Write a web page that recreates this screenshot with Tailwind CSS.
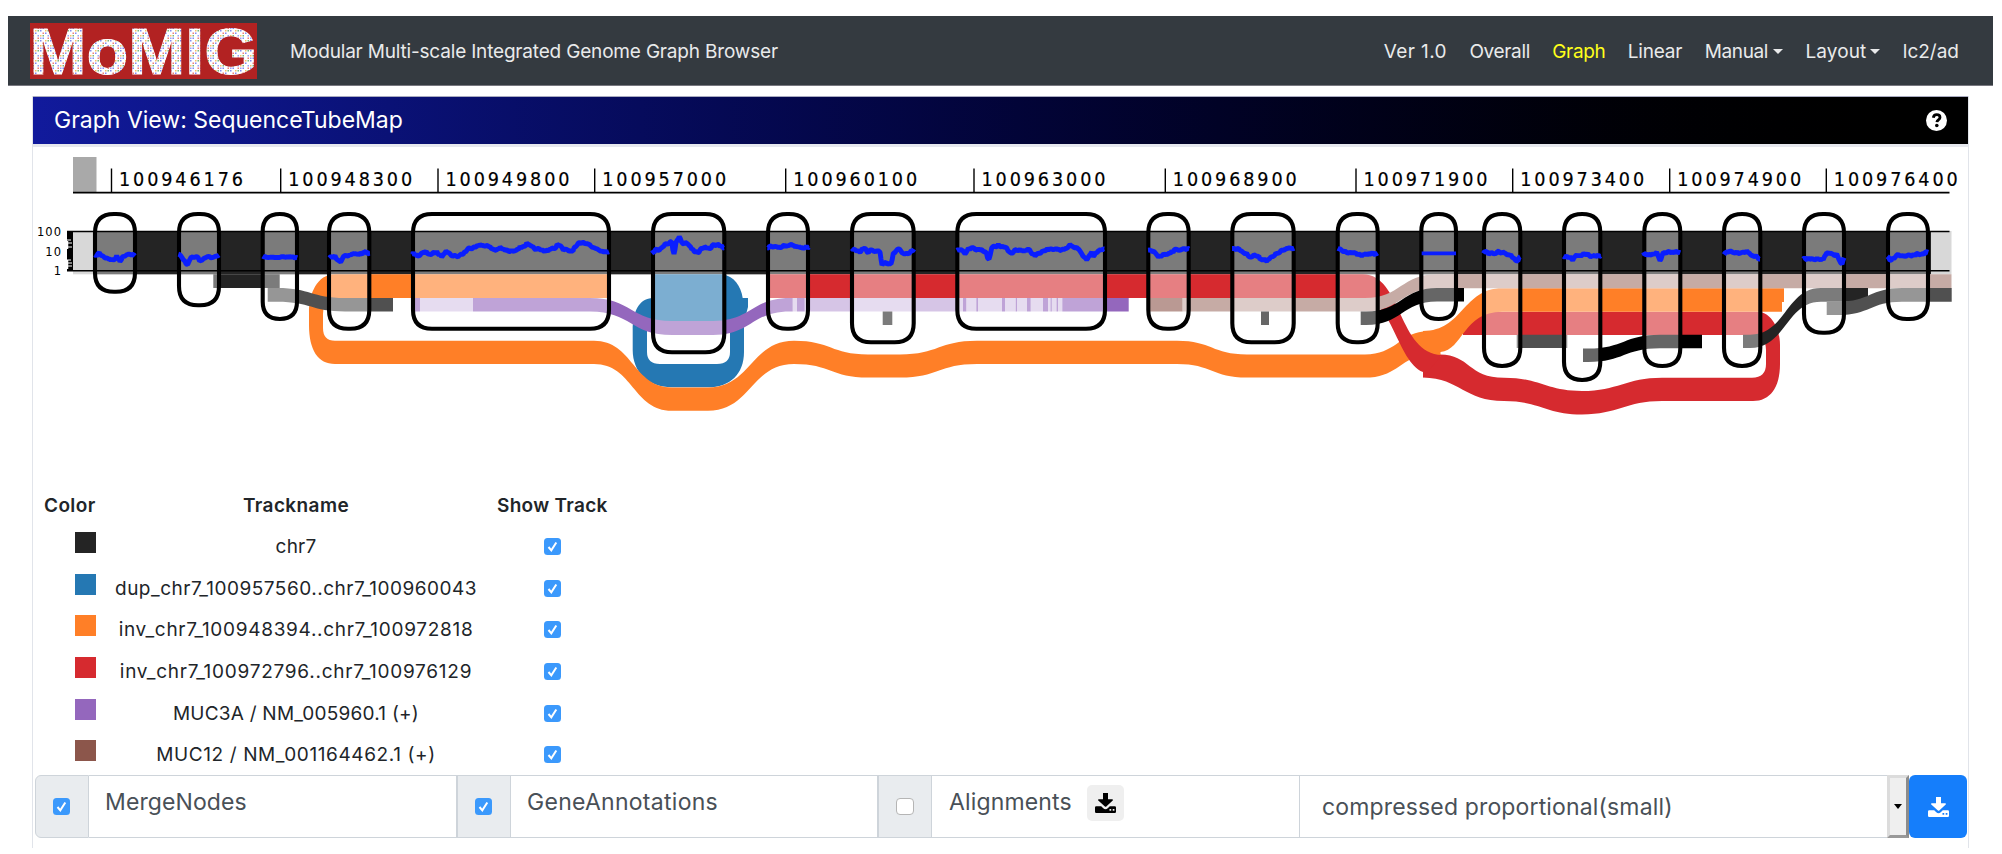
<!DOCTYPE html>
<html lang="en">
<head>
<meta charset="utf-8">
<title>MoMIG</title>
<script src="https://cdn.jsdelivr.net/npm/@tailwindcss/browser@4"></script>
</head>
<body class="bg-white w-[2002px] h-[854px] overflow-hidden font-[Inter,'Liberation_Sans',sans-serif] text-[#212529]">
<div class="h-[16px]"></div>
<nav class="mx-[8px] w-[1985px] h-[70px] bg-[#343a40] border-b border-[#77777f] flex items-center text-[19px] text-[#e9eaeb] whitespace-nowrap">
  <svg class="ml-[22px] w-[227px] h-[56px] shrink-0 overflow-visible" viewBox="30 23 227 56">
    <defs>
      <pattern id="mosaic" width="10" height="10" patternUnits="userSpaceOnUse">
        <rect width="10" height="10" fill="#fff"/>
        <g opacity=".7">
          <path fill="#4a5cf0" d="M0 0h1.500v1.500h-1.500zM5 2.500h1.500v1.500h-1.500zM2.500 7.500h1.500v1.500h-1.500z"/>
          <path fill="#e8453c" d="M2.500 2.500h1.500v1.500h-1.500zM7.500 7.500h1.500v1.500h-1.500z"/>
          <path fill="#f5a623" d="M5 0h1.500v1.500h-1.500zM0 5h1.500v1.500h-1.500z"/>
          <path fill="#3f9a4a" d="M2.500 5h1.500v1.500h-1.500zM7.500 0h1.500v1.500h-1.500z"/>
          <path fill="#6c7bf8" d="M7.500 5h1.500v1.500h-1.500zM0 7.500h1.500v1.500h-1.500z"/>
        </g>
      </pattern>
    </defs>
    <rect x="30" y="23" width="227" height="56" fill="#b22222"/>
    <text x="29.500" y="73.500" font-family="Liberation Sans" font-weight="bold" font-size="65" textLength="228" lengthAdjust="spacingAndGlyphs" fill="url(#mosaic)" stroke="url(#mosaic)" stroke-width="1">MoMIG</text>
  </svg>
  <span class="ml-[33px] pt-[4px] tracking-[-0.18px]">Modular Multi-scale Integrated Genome Graph Browser</span>
  <div class="ml-auto mr-[34px] pt-[4px] flex items-center gap-[22.400px]">
    <span class="tracking-[0.4px]">Ver 1.0</span>
    <span class="tracking-[-0.35px]">Overall</span>
    <span class="text-[#ffff1a] tracking-[-0.35px]">Graph</span>
    <span class="tracking-[-0.2px]">Linear</span>
    <span class="flex items-center gap-[5px]"><span class="tracking-[-0.35px]">Manual</span><i class="-mt-[2px] border-x-5 border-t-5 border-x-transparent border-t-current"></i></span>
    <span class="flex items-center gap-[4px]"><span class="tracking-[0.1px]">Layout</span><i class="-mt-[2px] border-x-5 border-t-5 border-x-transparent border-t-current"></i></span>
    <span>lc2/ad</span>
  </div>
</nav>
<section class="mt-[10px] ml-[32px] w-[1937px] h-[752px] border-x border-[#e1e4ea]">
  <header class="h-[48px] bg-linear-to-r from-[#111a9c] to-black border-t border-[#a9abc0] flex items-center justify-between pl-[21px] pr-[21px] text-white text-[23px]">
    <span>Graph View: SequenceTubeMap</span>
    <svg class="w-[21px] h-[21px]" viewBox="0 0 21 21"><circle cx="10.5" cy="10.5" r="10.5" fill="#fff"/><path d="M7.300 7.800C7.600 5.600 9 4.700 10.700 4.700c1.900 0 3.300 1.100 3.300 2.800 0 2.300-2.900 2.500-3.100 4.600" fill="none" stroke="#000" stroke-width="2.800"/><circle cx="10.800" cy="15.500" r="1.800" fill="#000"/></svg>
  </header>
  <div class="h-[3px] bg-[#e6e8ee]"></div>
  <svg class="block w-[1935px] h-[333px]" viewBox="33 147 1935 333">
    <!-- position ruler -->
    <rect x="73" y="157" width="23.5" height="35" fill="#a9a9a9"/>
    <path d="M73 192.6H1949.5" stroke="#000" stroke-width="1.8"/>
    <g id="ruler" font-family="DejaVu Sans"></g>
    <!-- genome band -->
    <rect x="73" y="231" width="1878.5" height="43.3" fill="#d8d8d8"/>
    <rect x="95" y="231" width="1836" height="43.3" fill="#242424"/>
    <!-- red, upper right inversion -->
    <path fill="#d62a2f" d="M1463 311.7H1757C1772 311.7 1780 330 1780 345V364C1780 388 1770 401 1753 401H1662C1626 401 1618 414.4 1582 414.4C1546 414.4 1540 401 1504 401C1464 401 1461 378.5 1423 377.5V354.4H1440C1470 354.4 1468 377.7 1504 377.7C1540 377.7 1546 391 1582 391C1618 391 1626 377.7 1662 377.7H1752Q1766 377.7 1766 364V350Q1766 335 1752 335H1463Z"/>
    <!-- blue duplication -->
    <path fill="#2578b3" fill-rule="evenodd" d="M653 274.3H722C734 276 741 286 742.7 298H748V307L744 322V352C744 374 730 387.3 708 387.3H672C648 387.3 632.7 372 632.7 350V330C632.7 312 639 298 653 298ZM653 321Q647 321 647 330V352Q647 364 660 364H717Q730 364 730 352V330Q730 321 722 321Z"/>
    <!-- orange inversion -->
    <path fill="#ff7f27" d="M611 274.3H335C317 274.3 309 294 309 312V325C309 350 318 364 335 364H594C633 364 633 410.8 672 410.8H708C751 410.8 751 364 794 364C831 364 831 377.6 868 377.6H900C938.500 377.6 938.5 364 977 364H1177C1212 364 1212 377.6 1247 377.6H1365C1395 377.6 1400 360 1423 354.4V331.500C1400 334 1395 354.4 1365 354.4H1247C1212 354.4 1212 340.7 1177 340.7H977C938.5 340.7 938.5 354.4 900 354.4H868C831 354.4 831 340.7 794 340.7C751 340.7 751 387.4 708 387.4H672C633 387.4 633 340.7 594 340.7H335Q323 340.7 323 328V314Q323 297.9 340 297.9H611Z"/>
    <path fill="#ff7f27" d="M1423 331C1463 331 1463 288.3 1502 288.3H1784V302H1782V311.7H1502C1463 311.7 1463 350 1440.500 352V357H1423Z"/>
    <!-- red, left inversion -->
    <path fill="#d62a2f" d="M766 274.3H1363C1402 274.3 1398 354.4 1442 355L1423 377.5V372C1397 361 1392 297.9 1361 297.9H766Z"/>
    <!-- gene annotations -->
    <g fill="#9467bd">
      <path d="M412 298h8v13.4h-8zM473 298H590C631 298 631 321 672 321H713C751.500 321 751.5 298 790 298H792.7V311.400H790C751.5 311.4 751.5 335 713 335H672C631 335 631 311.4 590 311.4H473ZM797 298h7.7v13.4h-7.700zM963 298h3.300v13.4h-3.300zM976.300 298h1.700v13.4h-1.700zM1002 298h3v13.4h-3zM1015.700 298h1.300v13.4h-1.300zM1027 298h3.700v13.4h-3.700zM1043 298h5v13.4h-5zM1050.500 298h1.300v13.4h-1.300zM1056.500 298h1.500v13.4h-1.500zM1062.300 298H1128.700V311.4H1062.300z"/>
      <path opacity=".38" d="M420 298h53v13.4h-53zM792.7 298h4.300v13.4h-4.300zM804.700 298H963v13.4H804.700zM966.300 298h10v13.4h-10zM978 298h24v13.4h-24zM1005 298h10.700v13.4h-10.700zM1017 298h10v13.4h-10zM1030.700 298H1043v13.4h-12.300zM1048 298h2.500v13.400h-2.500zM1051.800 298h4.700v13.4h-4.700zM1058 298h4.300v13.4h-4.300z"/>
    </g>
    <path fill="#8c564b" d="M1148 298h34.700v13.400h-34.700z"/>
    <path fill="#c6aba5" d="M1182.700 298H1365C1401 298 1401 274.3 1437 274.3H1951.500V288.200H1437C1401 288.200 1401 311.4 1365 311.4H1182.700Z"/>
    <!-- alignments -->
    <g fill="#242424">
      <path d="M213.300 274.3h66.400V288h-66.400zM882.700 311.4h9.600V325h-9.600z"/>
      <path d="M1743 334.7H1750C1786 334.7 1786 288 1821 288H1868V301.700H1821C1786 301.7 1786 348 1750 348H1743Z"/>
    </g>
    <g fill="#505050">
      <path d="M267.700 288H277C311 288 311 298 345 298H393V311.4H345C311 311.4 311 301.7 277 301.7H267.700ZM1516.700 334.7h50.600V348h-50.600z"/>
      <path d="M1826.700 301.7H1838C1870 301.7 1870 288 1902 288H1951.700V301.7H1902C1870 301.7 1870 315 1838 315H1826.700Z"/>
    </g>
    <path d="M1261 311.4h8V325h-8zM1360.700 311.4H1366C1402 311.4 1402 288 1437 288H1464V301.5H1437C1402 301.5 1402 325 1366 325H1360.700ZM1583 348.500H1588C1624 348.500 1624 334.7 1660 334.7H1702V348.300H1660C1624 348.300 1624 362 1588 362H1583Z"/>
    <g id="nodes" fill="#fff" fill-opacity=".4" stroke="#000" stroke-width="4.100"></g>
    <!-- coverage axis -->
    <path d="M67 231.400H1949.500M67 270.700H1949.500" stroke="#000" stroke-width="1.500"/>
    <path d="M67 231h6v40h-6z"/>
    <path d="M67 240h4M67 243h5M67 247h5M67 260h4M67 263h5M67 266h5" stroke="#fff" stroke-width="1"/>
    <path d="M67.500 241v8M67.500 260v9" stroke="#fff" stroke-width="1.500"/>
    <g font-family="DejaVu Sans" font-size="11.500" letter-spacing="1" text-anchor="end"><text x="62" y="236">100</text><text x="62" y="255.500">10</text><text x="62" y="275">1</text></g>
    <g id="coverage" fill="none" stroke="#0a1eff" stroke-width="4.900" stroke-linejoin="bevel"></g>
  </svg>
  <div class="h-[295px] text-[19px] whitespace-nowrap">
    <div class="h-[52px] grid grid-cols-[76px_374px_118px] font-semibold tracking-[0.4px]">
      <span class="pl-[11px] pt-[12px]">Color</span><span class="text-center pt-[12px]">Trackname</span><span class="pt-[12px] pl-[14px] tracking-[0.3px]">Show Track</span>
    </div>
    <div id="tracks" class="grid auto-rows-[41.700px]"></div>
  </div>
  <div class="relative ml-[2px] h-[63px] flex text-[23px] text-[#495057] whitespace-nowrap">
    <div class="w-[54px] bg-[#e9ecef] border border-[#ced4da] rounded-l-md flex items-center justify-center pr-[2px]"><svg data-check class="w-[17px] h-[17px]"></svg></div>
    <div class="w-[368px] border-y border-r border-[#ced4da] pl-[16px] pt-[9px] tracking-[0.1px]">MergeNodes</div>
    <div class="w-[54px] bg-[#e9ecef] border border-[#ced4da] flex items-center justify-center pr-[2px]"><svg data-check class="w-[17px] h-[17px]"></svg></div>
    <div class="w-[367px] border-y border-r border-[#ced4da] pl-[16px] pt-[9px] tracking-[0.28px]">GeneAnnotations</div>
    <div class="w-[54px] bg-[#e9ecef] border border-[#ced4da] flex items-center justify-center"><i class="w-[18px] h-[17px] bg-white border border-[#b5b5b5] rounded-[4px]"></i></div>
    <div class="w-[368px] border-y border-r border-[#ced4da] pl-[17px] flex"><span class="pt-[9px] tracking-[0.15px]">Alignments</span>
      <span class="ml-[15px] mt-[9px] w-[37px] h-[36px] rounded-[5px] bg-[#efefef] flex items-center justify-center"><svg class="w-[21px] h-[20px] text-black" viewBox="0 0 21 20"><use href="#dl"/></svg></span>
    </div>
    <div class="w-[587px] border-y border-[#ced4da] pl-[22px] pt-[14px] tracking-[0.15px]">compressed proportional(small)</div>
    <div class="w-[22px] bg-[#efefef] border-3 border-t-[#dcdcdc] border-l-[#dcdcdc] border-b-[#999] border-r-[#8c8c8c] flex items-center justify-center"><i class="border-x-4 border-t-5 border-x-transparent border-t-black"></i></div>
    <div class="w-[58px] bg-[#157efb] rounded-md flex items-center justify-center"><svg class="w-[21px] h-[20px] text-white" viewBox="0 0 21 20"><use href="#dl"/></svg></div>
  </div>
</section>
<svg class="hidden"><defs>
  <g id="dl" fill="currentColor"><path d="M8 0h5V6.200h4.200c.8 0 1 .8.500 1.300l-6.400 6a1 1 0 0 1-1.400 0L3.300 7.500C2.800 7 3 6.200 3.800 6.200H8Z"/><path fill-rule="evenodd" d="M1.200 13.200H6.200L8 15a3.500 3.500 0 0 0 5 0l1.800-1.800H19.800a1.200 1.200 0 0 1 1.200 1.200V18.800a1.200 1.200 0 0 1-1.200 1.200H1.200A1.200 1.200 0 0 1 0 18.800V14.400a1.200 1.200 0 0 1 1.200-1.200ZM14.500 16v1.700h1.700V16ZM17.700 16v1.700h1.700V16Z"/></g>
</defs></svg>
<script>
const check = '<rect width="17" height="17" rx="3.500" fill="#3b99fc"/><path d="M4.500 9L7.300 12.300L12.300 4.500" fill="none" stroke="#fff" stroke-width="2"/>';
const tracks = [
  ['chr7', '#242424', 0.2], ['dup_chr7_100957560..chr7_100960043', '#2578b3', 0.5],
  ['inv_chr7_100948394..chr7_100972818', '#ff7f27', 0.7], ['inv_chr7_100972796..chr7_100976129', '#d62a2f', 0.75],
  ['MUC3A / NM_005960.1 (+)', '#9467bd', 0.23], ['MUC12 / NM_001164462.1 (+)', '#8c564b', 0.6]];
document.getElementById('tracks').innerHTML = tracks.map(([n, c, ls]) =>
  `<div class="grid grid-cols-[76px_374px_118px]"><i class="ml-[42px] w-[21px] h-[21px]" style="background:${c}"></i><span class="text-center pt-[1px]" style="letter-spacing:${ls}px">${n}</span><svg data-check class="ml-[61px] mt-[6px] w-[17px] h-[17px]"></svg></div>`).join('');
document.querySelectorAll('[data-check]').forEach(s => s.innerHTML = check);

const ruler = [[111.5, 100946176], [280.7, 100948300], [438, 100949800], [594.7, 100957000], [785.7, 100960100], [974, 100963000], [1165.3, 100968900], [1356, 100971900], [1512.7, 100973400], [1669.7, 100974900], [1826.3, 100976400]];
document.getElementById('ruler').innerHTML = ruler.map(([x, t]) =>
  `<path d="M${x} 168.500V192" stroke="#000" stroke-width="1.400"/><text transform="translate(${x + 7.5} 186.300) scale(.9 1)" font-size="19.600" letter-spacing="3.200" stroke="#000" stroke-width=".2">${t}</text>`).join('');

const nodes = [[93, 137, 293.7], [177, 221, 307.3], [260.7, 299, 321], [327, 371.3, 330.7], [411, 611, 330.7], [651, 726.3, 354.3], [766, 810, 330.7], [850, 915.7, 344.3], [955.3, 1107, 330.7], [1146.3, 1190.7, 330.7], [1230.3, 1295.7, 344.3], [1335.7, 1379.7, 344.3], [1419.3, 1458, 321], [1482, 1522.3, 368], [1562, 1602.3, 382], [1642.3, 1682.3, 368], [1722, 1762.3, 368], [1802, 1846, 334.7], [1886, 1930, 321]];
document.getElementById('nodes').innerHTML = nodes.map(([a, b, c]) => {
  const l = a + 2, r = b - 2, t = 214, m = c - 2, k = Math.min(19, (r - l) / 2);
  return `<path d="M${l} ${t + k}Q${l} ${t} ${l + k} ${t}H${r - k}Q${r} ${t} ${r} ${t + k}V${m - k}Q${r} ${m} ${r - k} ${m}H${l + k}Q${l} ${m} ${l} ${m - k}Z"/>`;
}).join('');

// coverage key points per node, in thirds of a pixel from (ox, 145)
const cov = [
  [20, '225,333 238,325 250,335 265,340 280,346 290,335 300,346 315,330 330,325 345,333'],
  [20, '475,325 490,345 503,358 510,340 530,335 543,350 560,333 575,340 597,330'],
  [20, '728,334 745,337 760,336 775,338 790,335 832,338'],
  [20, '928,338 945,335 962,348 970,333 985,336 1000,325 1018,328 1035,322 1050,325'],
  [400, '37,325 55,332 75,322 95,328 110,322 125,333 138,315 150,328 170,335 190,325 205,312 225,303 255,300 285,315 300,310 330,320 360,308 380,298 400,310 430,317 460,312 475,297 490,315 515,318 535,298 560,293 580,305 600,318 627,320'],
  [400, '755,322 770,312 785,312 795,295 815,292 822,330 828,290 838,275 848,295 860,293 875,312 893,322 910,308 925,312 945,298 972,308'],
  [400, '1102,308 1120,303 1145,306 1178,300 1200,308 1227,306'],
  [780, '215,310 240,318 250,310 265,320 290,315 300,325 306,360 318,352 322,360 333,360 340,325 355,310 370,323 390,325 402,312'],
  [780, '530,315 545,315 555,330 565,312 590,312 615,318 627,345 635,310 655,300 680,310 695,325 705,312 735,318 745,310 765,335 790,315 820,312 850,315 870,300 890,310 905,325 920,345 935,325 940,335 955,318 973,312'],
  [1140, '24,317 45,322 55,333 75,328 95,320 120,312 147,312'],
  [1140, '276,308 300,315 320,328 335,335 345,330 360,340 380,345 400,335 415,322 440,312 463,310'],
  [1140, '593,310 615,318 640,325 665,332 690,326 713,324'],
  [1340, '245,325 348,325'],
  [1340, '430,322 450,325 480,322 505,328 520,335 530,350 541,335'],
  [1340, '670,335 690,335 698,345 710,332 735,328 760,335 782,332'],
  [1640, '10,325 35,328 50,325 60,350 70,325 95,320 121,323'],
  [1640, '252,328 262,318 295,322 320,320 340,332 360,342'],
  [1640, '490,342 520,340 550,345 560,325 590,330 606,360 612,338'],
  [1640, '742,335 750,348 770,330 797,335 825,330 865,322']];
let seed = 7;
const rnd = () => (seed = (seed * 16807) % 2147483647) / 2147483647 - 0.5;
document.getElementById('coverage').innerHTML = cov.map(([ox, s], i) => {
  const p = s.split(' ').map(q => q.split(',').map(Number)), out = [];
  for (let j = 0; j < p.length - 1; j++) {
    const [x0, y0] = p[j], [x1, y1] = p[j + 1], n = Math.max(1, Math.round((x1 - x0) / 4));
    for (let k = 0; k < n; k++) out.push([x0 + (x1 - x0) * k / n, y0 + (y1 - y0) * k / n + (i === 12 ? 0 : rnd() * (i === 2 ? 3 : 8))]);
  }
  out.push(p[p.length - 1]);
  return `<polyline points="${out.map(([x, y]) => (ox + x / 3).toFixed(1) + ',' + (145 + y / 3).toFixed(1)).join(' ')}"${i === 12 ? ' stroke-width="3.700"' : ''}/>`;
}).join('');
</script>
</body>
</html>
